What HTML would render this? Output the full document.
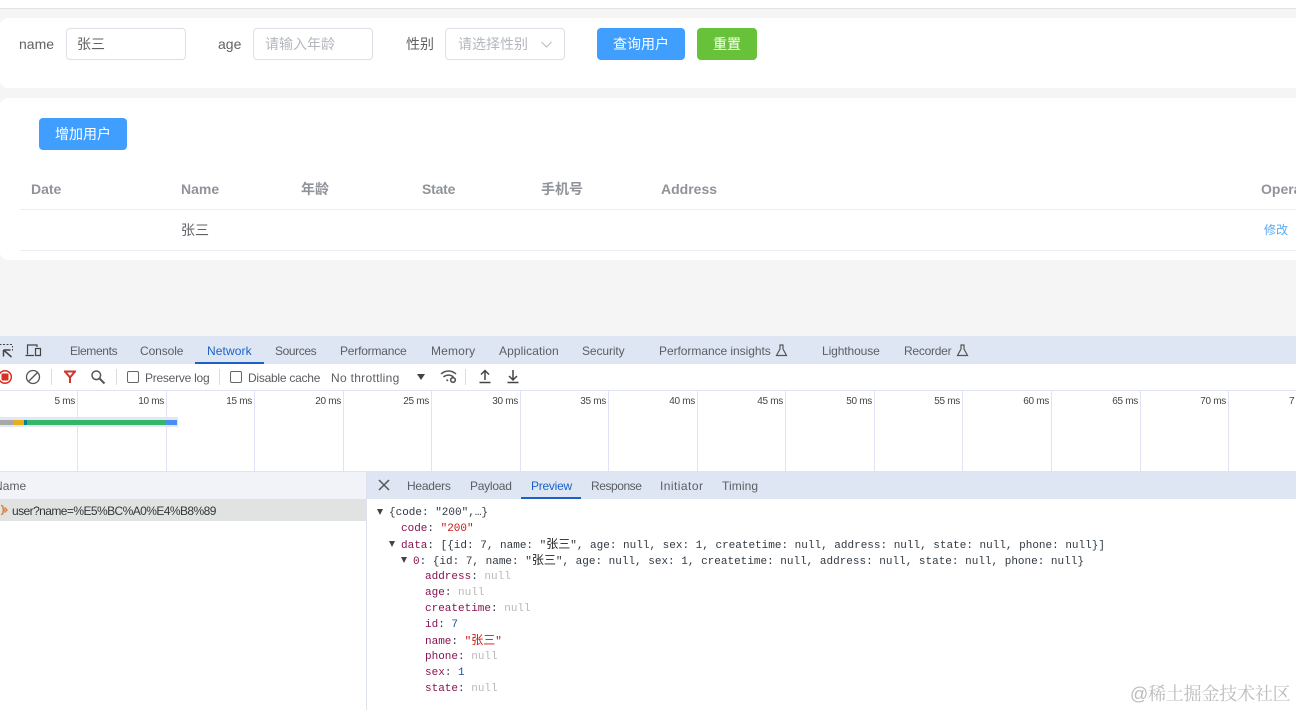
<!DOCTYPE html>
<html><head><meta charset="utf-8"><style>
html,body{margin:0;padding:0}
body{width:1296px;height:710px;overflow:hidden;position:relative;background:#fff;font-family:"Liberation Sans","Noto Sans CJK SC",sans-serif}
div,span.a,svg{position:absolute}
.t{white-space:nowrap;line-height:16px;height:16px}
.f{font-size:14px;color:#606266;line-height:20px;height:20px;white-space:nowrap}
.in{background:#fff;border:1px solid #dcdfe6;border-radius:4px;box-sizing:border-box;height:32px;top:28px;width:120px}
.ph{color:#b4b7bd}
.b{color:#fff;font-size:14px;border-radius:4px;height:32px;line-height:32px;text-align:center;background:#409eff}
.h{font-size:14px;font-weight:bold;color:#909399;top:179px;line-height:20px;height:20px;white-space:nowrap}
.dt{font-size:12px;color:#5b5e63;top:343px;white-space:nowrap;line-height:16px}
.dp{font-size:12px;color:#5b5e63;top:478px;white-space:nowrap;line-height:16px}
.g{width:1px;background:#dfe3f5;top:390px;height:81px}
.ms{font-size:10px;color:#444;top:396px;width:40px;text-align:right;line-height:12px;height:12px;white-space:nowrap;letter-spacing:-.3px}
.m{font-family:"Liberation Mono","Noto Sans CJK SC",monospace;font-size:11px;line-height:16px;height:16px;white-space:nowrap;color:#303942}
.c{font-size:12px;color:#222}
.k{color:#881391}.s{color:#c41a16}.n{color:#b9b9b9}.v{color:#1c00cf}.kk{color:#881350}
.tri{width:0;height:0;border-left:3.5px solid transparent;border-right:3.5px solid transparent;border-top:6px solid #444}
</style></head><body>
<div style="left:0;top:8px;width:1296px;height:328px;background:#f5f5f5"></div>
<div style="left:0;top:8px;width:1296px;height:1px;background:#e2e2e2"></div>
<div style="left:0;top:18px;width:1320px;height:70px;background:#fff;border-radius:8px"></div>
<div style="left:0;top:98px;width:1320px;height:162px;background:#fff;border-radius:8px"></div>

<div class="f" style="left:19px;top:34px">name</div>
<div class="in" style="left:66px"></div>
<div class="f" style="left:77px;top:34px">张三</div>
<div class="f" style="left:218px;top:34px">age</div>
<div class="in" style="left:253px"></div>
<div class="f ph" style="left:265px;top:34px">请输入年龄</div>
<div class="f" style="left:406px;top:34px">性别</div>
<div class="in" style="left:445px"></div>
<div class="f ph" style="left:458px;top:34px">请选择性别</div>
<svg style="left:540px;top:40px" width="14" height="9" viewBox="0 0 14 9"><path d="M1.500 2 L6.500 7 L11.500 2" fill="none" stroke="#b8bbc1" stroke-width="1.100"/></svg>
<div class="b" style="left:597px;top:28px;width:88px">查询用户</div>
<div class="b" style="left:697px;top:28px;width:60px;background:#67c23a">重置</div>
<div class="b" style="left:39px;top:118px;width:88px">增加用户</div>

<div class="h" style="left:31px">Date</div>
<div class="h" style="left:181px">Name</div>
<div class="h" style="left:301px">年龄</div>
<div class="h" style="left:422px;letter-spacing:-.2px">State</div>
<div class="h" style="left:541px">手机号</div>
<div class="h" style="left:661px">Address</div>
<div class="h" style="left:1261px">Operations</div>
<div style="left:20px;top:209px;width:1276px;height:1px;background:#ebeef5"></div>
<div class="f" style="left:181px;top:220px">张三</div>
<div style="left:1264px;top:222px;font-size:12px;line-height:16px;color:#5aa9f5;white-space:nowrap">修改</div>
<div style="left:20px;top:250px;width:1276px;height:1px;background:#ebeef5"></div>

<!-- devtools -->
<div style="left:0;top:336px;width:1296px;height:28px;background:#dee6f4"></div>
<svg style="left:0;top:342px" width="14" height="16" viewBox="0 0 14 16"><path d="M0 2.500H1.500M3 2.500H5M6.500 2.500H8.500M10 2.500H12M12.500 4V5.500M12.500 7V8.500" fill="none" stroke="#444" stroke-width="1"/><path d="M3.500 8H10.500M3.500 8V14.500M3.500 8L11.500 15" fill="none" stroke="#444" stroke-width="1.500"/></svg>
<svg style="left:25px;top:344px" width="18" height="13" viewBox="0 0 18 13"><path d="M2.500 10.500V1H12V3M0.500 11.500H9M10.500 4.500H15.500V11.500H10.500Z" fill="none" stroke="#444" stroke-width="1.200"/></svg>
<div class="dt" style="left:70px;letter-spacing:-.35px">Elements</div>
<div class="dt" style="left:140px;letter-spacing:-.1px">Console</div>
<div class="dt" style="left:207px;color:#1a62c9;letter-spacing:.1px">Network</div>
<div style="left:195px;top:362px;width:69px;height:2px;background:#1a62c9"></div>
<div class="dt" style="left:275px;letter-spacing:-.4px">Sources</div>
<div class="dt" style="left:340px;letter-spacing:-.2px">Performance</div>
<div class="dt" style="left:431px;letter-spacing:.15px">Memory</div>
<div class="dt" style="left:499px;letter-spacing:.1px">Application</div>
<div class="dt" style="left:582px;letter-spacing:-.1px">Security</div>
<div class="dt" style="left:659px;letter-spacing:-.05px">Performance insights</div>
<svg style="left:775px;top:344px" width="13" height="13" viewBox="0 0 13 13"><path d="M4.500 1H8.500M5 1V5L1.500 11.500H11.500L8 5V1" fill="none" stroke="#555" stroke-width="1.200"/></svg>
<div class="dt" style="left:822px;letter-spacing:-.1px">Lighthouse</div>
<div class="dt" style="left:904px;letter-spacing:-.25px">Recorder</div>
<svg style="left:956px;top:344px" width="13" height="13" viewBox="0 0 13 13"><path d="M4.500 1H8.500M5 1V5L1.500 11.500H11.500L8 5V1" fill="none" stroke="#555" stroke-width="1.200"/></svg>

<!-- toolbar -->
<div style="left:0;top:390px;width:1296px;height:1px;background:#dfe3f5"></div>
<svg style="left:-2px;top:369px" width="16" height="16" viewBox="0 0 16 16"><circle cx="7" cy="8" r="6.300" fill="#fff" stroke="#d93025" stroke-width="1.500"/><rect x="3.500" y="4.500" width="7" height="7" rx="1" fill="#d93025"/></svg>
<svg style="left:25px;top:369px" width="16" height="16" viewBox="0 0 16 16"><circle cx="8" cy="8" r="6.500" fill="none" stroke="#555" stroke-width="1.300"/><path d="M3.500 12.500L12.500 3.500" stroke="#555" stroke-width="1.300"/></svg>
<div style="left:51px;top:369px;width:1px;height:16px;background:#dcdcdc"></div>
<svg style="left:63px;top:370px" width="14" height="14" viewBox="0 0 14 14"><path d="M1 1.500H13M2.500 2L7 7.500V13M11.500 2L7 7.500" fill="none" stroke="#d0342c" stroke-width="2"/></svg>
<svg style="left:90px;top:369px" width="16" height="16" viewBox="0 0 16 16"><circle cx="6.300" cy="6.300" r="4.300" fill="none" stroke="#555" stroke-width="1.500"/><path d="M9.500 9.500L14.500 14.500" stroke="#555" stroke-width="2"/></svg>
<div style="left:116px;top:369px;width:1px;height:16px;background:#dcdcdc"></div>
<div style="left:127px;top:371px;width:12px;height:12px;box-sizing:border-box;border:1px solid #666;border-radius:2px;background:#fff"></div>
<div class="dt" style="left:145px;top:370px;letter-spacing:-.25px">Preserve log</div>
<div style="left:219px;top:369px;width:1px;height:16px;background:#dcdcdc"></div>
<div style="left:230px;top:371px;width:12px;height:12px;box-sizing:border-box;border:1px solid #666;border-radius:2px;background:#fff"></div>
<div class="dt" style="left:248px;top:370px;letter-spacing:-.25px">Disable cache</div>
<div class="dt" style="left:331px;top:370px;letter-spacing:.3px">No throttling</div>
<div class="tri" style="left:417px;top:374px;border-left-width:4.500px;border-right-width:4.500px"></div>
<svg style="left:440px;top:369px" width="18" height="15" viewBox="0 0 18 15"><path d="M1 5C5.500 1 11.500 1 16 5M3.500 8C6.500 5.500 10.500 5.500 13.500 8M6.500 10.500L8 12" fill="none" stroke="#555" stroke-width="1.500"/><circle cx="13" cy="11" r="2.300" fill="#fff" stroke="#555" stroke-width="1.600"/></svg>
<div style="left:465px;top:369px;width:1px;height:16px;background:#dcdcdc"></div>
<svg style="left:478px;top:369px" width="14" height="15" viewBox="0 0 14 15"><path d="M7 11V2M3 5.500L7 1.500L11 5.500M1.500 13.500H12.500" fill="none" stroke="#444" stroke-width="1.500"/></svg>
<svg style="left:506px;top:369px" width="14" height="15" viewBox="0 0 14 15"><path d="M7 1V10.500M3 7L7 11L11 7M1.500 13.500H12.500" fill="none" stroke="#444" stroke-width="1.500"/></svg>

<!-- grid -->
<div class="g" style="left:77px"></div><div class="g" style="left:166px"></div><div class="g" style="left:254px"></div><div class="g" style="left:343px"></div><div class="g" style="left:431px"></div><div class="g" style="left:520px"></div><div class="g" style="left:608px"></div><div class="g" style="left:697px"></div><div class="g" style="left:785px"></div><div class="g" style="left:874px"></div><div class="g" style="left:962px"></div><div class="g" style="left:1051px"></div><div class="g" style="left:1140px"></div><div class="g" style="left:1228px"></div>
<div class="ms" style="left:35px">5 ms</div><div class="ms" style="left:124px">10 ms</div><div class="ms" style="left:212px">15 ms</div><div class="ms" style="left:301px">20 ms</div><div class="ms" style="left:389px">25 ms</div><div class="ms" style="left:478px">30 ms</div><div class="ms" style="left:566px">35 ms</div><div class="ms" style="left:655px">40 ms</div><div class="ms" style="left:743px">45 ms</div><div class="ms" style="left:832px">50 ms</div><div class="ms" style="left:920px">55 ms</div><div class="ms" style="left:1009px">60 ms</div><div class="ms" style="left:1098px">65 ms</div><div class="ms" style="left:1186px">70 ms</div>
<div class="ms" style="left:1289px;text-align:left;width:10px">7</div>
<div style="left:0;top:417px;width:178px;height:10px;background:#dfe7f8"></div>
<div style="left:0;top:420px;width:13px;height:5px;background:#a8a8a8"></div>
<div style="left:13px;top:420px;width:11px;height:5px;background:#e6ae18"></div>
<div style="left:24px;top:420px;width:3px;height:5px;background:#00838f"></div>
<div style="left:27px;top:420px;width:139px;height:5px;background:#35b566"></div>
<div style="left:166px;top:420px;width:11px;height:5px;background:#4a8df0"></div>

<!-- lower panels -->
<div style="left:0;top:471px;width:1296px;height:1px;background:#dfe3f5"></div>
<div style="left:0;top:472px;width:366px;height:27px;background:#f1f3f9"></div>
<div style="left:366px;top:471px;width:1px;height:239px;background:#dde1ee"></div>
<div style="left:367px;top:472px;width:929px;height:27px;background:#dee6f4"></div>
<div class="dp" style="left:-6px;letter-spacing:.05px">Name</div>
<div style="left:0;top:499px;width:366px;height:22px;background:#e0e3e1"></div>
<svg style="left:0;top:504px" width="8" height="12" viewBox="0 0 8 12"><path d="M1 1.500C3 1.500 3 2.500 3 4C3 5.500 4 6 5 6C4 6 3 6.500 3 8C3 9.500 3 10.500 1 10.500M4.500 3.500L7 6L4.500 8.500" fill="none" stroke="#e0803c" stroke-width="1.500"/></svg>
<div class="dp" style="left:12px;top:503px;color:#33373b;letter-spacing:-.57px">user?name=%E5%BC%A0%E4%B8%89</div>
<svg style="left:378px;top:479px" width="12" height="12" viewBox="0 0 12 12"><path d="M1 1L11 11M11 1L1 11" stroke="#555" stroke-width="1.500"/></svg>
<div class="dp" style="left:407px;letter-spacing:-.25px">Headers</div>
<div class="dp" style="left:470px;letter-spacing:-.25px">Payload</div>
<div class="dp" style="left:531px;color:#1a62c9;letter-spacing:-.25px">Preview</div>
<div style="left:521px;top:497px;width:60px;height:2px;background:#1a62c9"></div>
<div class="dp" style="left:591px;letter-spacing:-.45px">Response</div>
<div class="dp" style="left:660px;letter-spacing:.45px">Initiator</div>
<div class="dp" style="left:722px;letter-spacing:.1px">Timing</div>

<div class="tri" style="left:377px;top:509px"></div>
<div class="m" style="left:389px;top:505px">{code: "200",…}</div>
<div class="m" style="left:401px;top:521px"><span class="kk">code</span>: <span class="s">"200"</span></div>
<div class="tri" style="left:389px;top:541px"></div>
<div class="m" style="left:401px;top:537px"><span class="kk">data</span>: [{id: 7, name: "<span class="c">张三</span>", age: null, sex: 1, createtime: null, address: null, state: null, phone: null}]</div>
<div class="tri" style="left:401px;top:557px"></div>
<div class="m" style="left:413px;top:553px"><span class="kk">0</span>: {id: 7, name: "<span class="c">张三</span>", age: null, sex: 1, createtime: null, address: null, state: null, phone: null}</div>
<div class="m" style="left:425px;top:569px"><span class="kk">address</span>: <span class="n">null</span></div>
<div class="m" style="left:425px;top:585px"><span class="kk">age</span>: <span class="n">null</span></div>
<div class="m" style="left:425px;top:601px"><span class="kk">createtime</span>: <span class="n">null</span></div>
<div class="m" style="left:425px;top:617px"><span class="kk">id</span>: <span style="color:#1c4f9c">7</span></div>
<div class="m" style="left:425px;top:633px"><span class="kk">name</span>: <span class="s">"<span class="c" style="color:#c41a16">张三</span>"</span></div>
<div class="m" style="left:425px;top:649px"><span class="kk">phone</span>: <span class="n">null</span></div>
<div class="m" style="left:425px;top:665px"><span class="kk">sex</span>: <span style="color:#1c4f9c">1</span></div>
<div class="m" style="left:425px;top:681px"><span class="kk">state</span>: <span class="n">null</span></div>

<div style="left:1130px;top:683px;font-size:18px;line-height:22px;color:#bcbcbc;white-space:nowrap;letter-spacing:-.2px;font-family:'Liberation Sans','Noto Serif CJK SC',serif">@稀土掘金技术社区</div>
</body></html>
